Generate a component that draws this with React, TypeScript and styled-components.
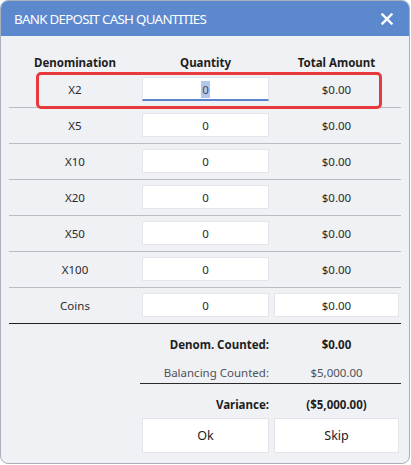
import React from 'react';
import styled, { createGlobalStyle } from 'styled-components';

const Global = createGlobalStyle`
  html, body { margin: 0; padding: 0; background: #ffffff; }
  body { font-family: "Noto Sans", "Open Sans", sans-serif; color: #222; }
  * { box-sizing: border-box; }
`;

const Window = styled.div`
  width: 410px;
  height: 464px;
  border: 1px solid #a9b0bc;
  border-radius: 8px;
  overflow: hidden;
  background: #eff1f5;
  display: flex;
  flex-direction: column;
`;

const TitleBar = styled.div`
  height: 35px;
  flex: none;
  background: #5c88ce;
  color: #ffffff;
  display: flex;
  align-items: center;
  justify-content: space-between;
  padding: 0 16px 0 13px;
  font-size: 13.3px;
  letter-spacing: -0.7px;
`;

const Body = styled.div`
  padding: 17px 8px 0 8px;
  display: flex;
  flex-direction: column;
`;

const Grid = styled.div`
  display: grid;
  grid-template-columns: 128px 127px 125px;
  column-gap: 5px;
  align-items: center;
`;

const HeaderRow = styled(Grid)`
  height: 19px;
  font-size: 11.5px;
  font-weight: 700;
  color: #1e1e1e;
`;

const HeadCell = styled.div<{ $pad?: number }>`
  text-align: center;
  padding-left: ${p => p.$pad ?? 0}px;
`;

const Row = styled(Grid)<{ $last?: boolean }>`
  position: relative;
  padding: 5px 0 6px;
  border-bottom: 1px solid ${p => (p.$last ? '#1f1f1f' : '#b9bdc5')};
  font-size: 11.5px;
`;

const Label = styled.div`
  text-align: center;
  padding-left: 4px;
  color: #2a2a2a;
`;

const Amount = styled.div`
  text-align: center;
  color: #2a2a2a;
`;

const Field = styled.div<{ $focused?: boolean }>`
  height: 24px;
  background: #ffffff;
  border: 1px solid #e3e5ea;
  border-bottom: ${p => (p.$focused ? '2px solid #5a82c8' : '1px solid #e3e5ea')};
  display: flex;
  align-items: center;
  justify-content: center;
  font-size: 11.5px;
  color: #2a2a2a;
  padding-top: ${p => (p.$focused ? 1 : 0)}px;
`;

const Selected = styled.span`
  background: #b3c7ea;
  color: #3b4a63;
  padding: 0 1px;
  line-height: 17px;
`;

const Highlight = styled.div`
  position: absolute;
  left: 27px;
  top: 0;
  width: 346px;
  bottom: -2px;
  border: 3px solid #e8393d;
  border-radius: 5px;
  pointer-events: none;
`;

const Summary = styled.div`
  padding-top: 9px;
  display: flex;
  flex-direction: column;
`;

const SumRow = styled(Grid)<{ $muted?: boolean; $bold?: boolean }>`
  height: 22px;
  font-size: 11.5px;
  font-weight: ${p => (p.$bold ? 700 : 400)};
  color: ${p => (p.$muted ? '#505257' : '#1e1e1e')};
`;

const SumLabel = styled.div`
  grid-column: 1 / 3;
  text-align: right;
`;

const SumValue = styled.div`
  text-align: center;
`;

const Divider = styled(Grid)`
  &::after {
    content: '';
    grid-column: 2 / 4;
    margin-left: -2px;
    margin-right: -2px;
    border-top: 1px solid #2a2a2a;
  }
`;

const Buttons = styled(Grid)`
  margin-top: 3px;
`;

const Button = styled.button<{ $col: number }>`
  grid-column: ${p => p.$col};
  height: 35px;
  background: #ffffff;
  border: 1px solid #e2e4e9;
  border-radius: 0;
  font-family: inherit;
  font-size: 12.5px;
  color: #222;
  padding: 0;
`;

const CloseIcon = () => (
  <svg width="12" height="12" viewBox="0 0 12 12">
    <path d="M1.5 1.5 L10.5 10.5 M10.5 1.5 L1.5 10.5" stroke="#ffffff" strokeWidth="2.4" strokeLinecap="square" />
  </svg>
);

const denoms = ['X2', 'X5', 'X10', 'X20', 'X50', 'X100'];

export default function App() {
  return (
    <>
      <Global />
      <Window>
        <TitleBar>
          <span>BANK DEPOSIT CASH QUANTITIES</span>
          <CloseIcon />
        </TitleBar>
        <Body>
          <HeaderRow>
            <HeadCell $pad={4}>Denomination</HeadCell>
            <HeadCell>Quantity</HeadCell>
            <HeadCell>Total Amount</HeadCell>
          </HeaderRow>
          {denoms.map((d, i) => (
            <Row key={d}>
              <Label>{d}</Label>
              {i === 0 ? (
                <Field $focused>
                  <Selected>0</Selected>
                </Field>
              ) : (
                <Field>0</Field>
              )}
              <Amount>$0.00</Amount>
              {i === 0 && <Highlight />}
            </Row>
          ))}
          <Row $last>
            <Label>Coins</Label>
            <Field>0</Field>
            <Field>$0.00</Field>
          </Row>
          <Summary>
            <SumRow $bold>
              <SumLabel>Denom. Counted:</SumLabel>
              <SumValue>$0.00</SumValue>
            </SumRow>
            <SumRow $muted style={{ marginTop: 6 }}>
              <SumLabel>Balancing Counted:</SumLabel>
              <SumValue>$5,000.00</SumValue>
            </SumRow>
            <Divider />
            <SumRow $bold style={{ marginTop: 9 }}>
              <SumLabel>Variance:</SumLabel>
              <SumValue>($5,000.00)</SumValue>
            </SumRow>
            <Buttons>
              <Button $col={2}>Ok</Button>
              <Button $col={3}>Skip</Button>
            </Buttons>
          </Summary>
        </Body>
      </Window>
    </>
  );
}
